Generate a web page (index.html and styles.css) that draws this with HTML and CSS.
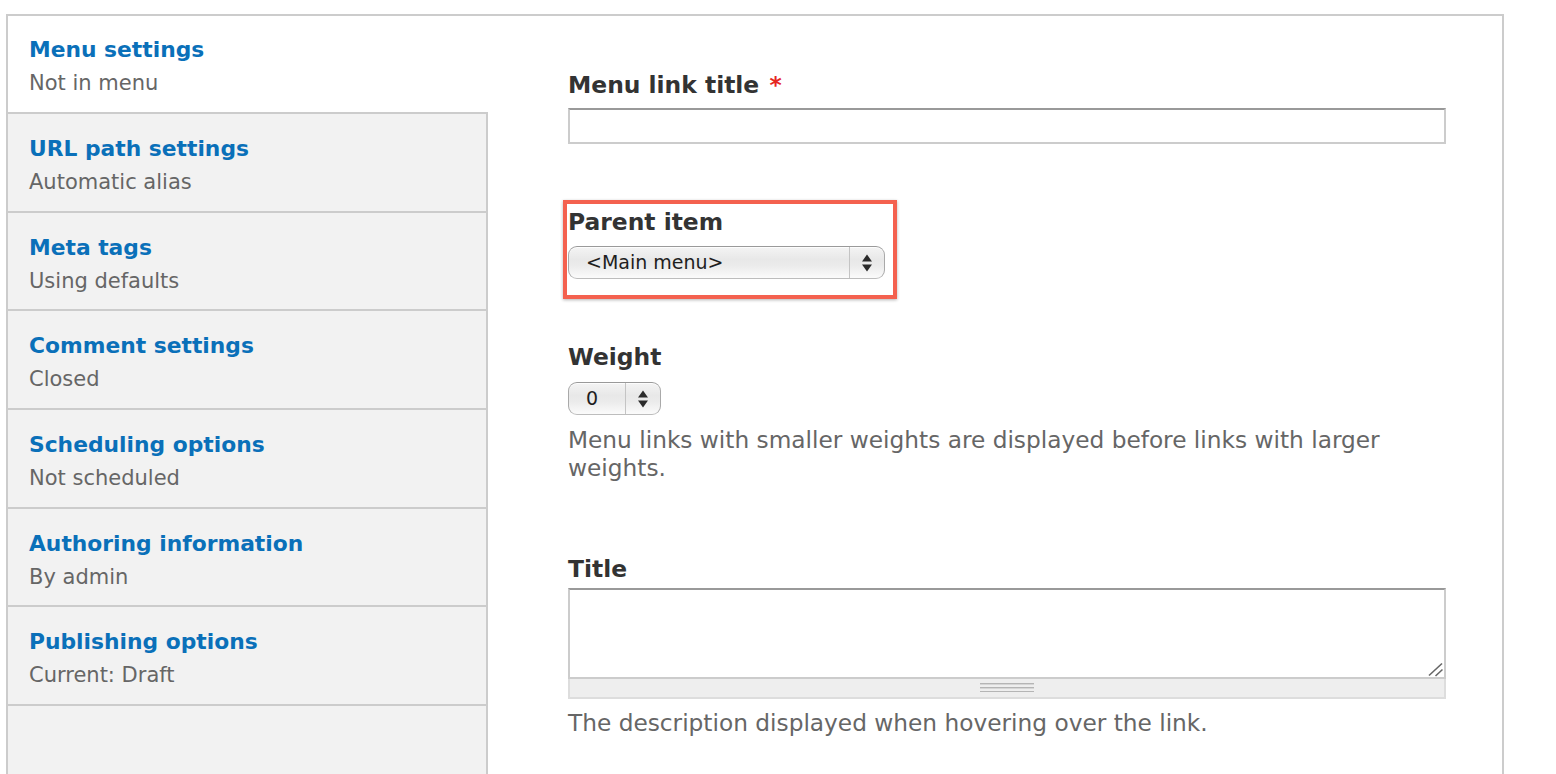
FILE: index.html
```html
<!DOCTYPE html>
<html lang="en">
<head>
<meta charset="utf-8">
<title>Menu settings</title>
<link rel="stylesheet" href="styles.css">
</head>
<body>
<div class="page">
  <div class="vtabs">
    <ul class="tab-list">
      <li class="tab active"><a class="tab-title">Menu settings</a><span class="tab-summary">Not in menu</span></li>
      <li class="tab"><a class="tab-title">URL path settings</a><span class="tab-summary">Automatic alias</span></li>
      <li class="tab"><a class="tab-title">Meta tags</a><span class="tab-summary">Using defaults</span></li>
      <li class="tab"><a class="tab-title">Comment settings</a><span class="tab-summary">Closed</span></li>
      <li class="tab"><a class="tab-title">Scheduling options</a><span class="tab-summary">Not scheduled</span></li>
      <li class="tab"><a class="tab-title">Authoring information</a><span class="tab-summary">By admin</span></li>
      <li class="tab"><a class="tab-title">Publishing options</a><span class="tab-summary">Current: Draft</span></li>
      <li class="tab-filler"></li>
    </ul>
    <div class="pane">
      <div class="item item-link-title">
        <label class="label">Menu link title <span class="req">*</span></label>
        <input class="text-input" type="text">
      </div>

      <div class="highlight">
        <label class="label">Parent item</label>
        <div class="select select-parent">
          <span class="select-value">&lt;Main menu&gt;</span>
          <span class="select-arrows">
            <svg width="12" height="20" viewBox="0 0 12 20"><polygon points="1,8.5 6,1.5 11,8.5" fill="#2b2b2b"/><polygon points="1,11.5 11,11.5 6,18.5" fill="#2b2b2b"/></svg>
          </span>
        </div>
      </div>

      <div class="item item-weight">
        <label class="label">Weight</label>
        <div class="select select-weight">
          <span class="select-value">0</span>
          <span class="select-arrows">
            <svg width="12" height="20" viewBox="0 0 12 20"><polygon points="1,8.5 6,1.5 11,8.5" fill="#2b2b2b"/><polygon points="1,11.5 11,11.5 6,18.5" fill="#2b2b2b"/></svg>
          </span>
        </div>
        <p class="description desc-weight">Menu links with smaller weights are displayed before links with larger weights.</p>
      </div>

      <div class="item item-title">
        <label class="label">Title</label>
        <div class="textarea-wrap">
          <div class="textarea-box">
            <textarea class="textarea"></textarea>
            <svg class="resizer" width="16" height="16" viewBox="0 0 16 16"><line x1="1" y1="14.5" x2="14" y2="2.5" stroke="#666" stroke-width="1.6"/><line x1="7.5" y1="15" x2="14.5" y2="8.5" stroke="#666" stroke-width="1.6"/></svg>
          </div>
          <div class="grippie"><div class="grip"></div></div>
        </div>
        <p class="description desc-title">The description displayed when hovering over the link.</p>
      </div>
    </div>
  </div>
</div>
</body>
</html>
```

FILE: styles.css
```css
html, body {
  margin: 0;
  padding: 0;
  background: #fff;
  overflow: hidden;
}

body {
  font-family: "DejaVu Sans", Verdana, sans-serif;
  color: #333;
}

.page {
  padding: 14px 0 0 6px;
}

.vtabs {
  display: flex;
  width: 1498px;
  height: 820px;
  box-sizing: border-box;
  border: 2px solid #ccc;
}

/* ---------- Vertical tab list ---------- */
.tab-list {
  display: flex;
  flex-direction: column;
  width: 480px;
  flex: 0 0 480px;
  margin: 0;
  padding: 0;
  list-style: none;
}

.tab {
  flex: 0 0 auto;
  height: 98.67px;
  box-sizing: border-box;
  padding: 19px 0 0 21px;
  background: #f2f2f2;
  border-right: 2px solid #ccc;
  border-bottom: 2px solid #ccc;
}

.tab.active {
  height: 98px;
  padding-top: 18px;
  background: #fff;
  border-right: none;
}

.tab-filler {
  flex: 1;
  background: #f2f2f2;
  border-right: 2px solid #ccc;
}

.tab-title {
  display: block;
  font-size: 21.8px;
  line-height: 32px;
  font-weight: 700;
  color: #0a70b9;
  text-decoration: none;
}

.tab-summary {
  display: block;
  margin-top: 1px;
  font-size: 21px;
  line-height: 32px;
  color: #666;
}

/* ---------- Pane ---------- */
.pane {
  flex: 1;
  padding: 55px 0 0 80px;
}

.label {
  display: block;
  font-size: 23.4px;
  line-height: 28px;
  font-weight: 700;
  color: #333;
}

.req {
  margin-left: 2px;
  color: #e6261f;
}

.text-input {
  display: block;
  box-sizing: border-box;
  width: 878px;
  height: 36px;
  margin: 9px 0 0 0;
  padding: 0;
  border: 2px solid #ccc;
  border-top-color: #999;
  background: #fff;
  outline: none;
}

/* highlight annotation around the Parent item field */
.highlight {
  width: 334px;
  box-sizing: border-box;
  margin: 56px 0 0 -5px;
  padding: 4px 0 16px 1px;
  border: 4px solid #f4614f;
  box-shadow: 0 1px 3px rgba(0, 0, 0, 0.3);
}

.select {
  display: flex;
  align-items: center;
  box-sizing: border-box;
  height: 33px;
  margin-top: 10px;
  border: 1px solid #a9a9a9;
  border-top-color: #9a9a9a;
  border-bottom-color: #bdbdbd;
  border-radius: 9px;
  background: linear-gradient(to bottom, #f4f4f4 0%, #e8e8e8 40%, #ebebeb 60%, #fbfbfb 100%);
  box-shadow: inset 0 1px 0 rgba(255, 255, 255, 0.8);
}

.select-parent {
  width: 317px;
}

.select-weight {
  width: 93px;
  margin-top: 11px;
}

.select-value {
  flex: 1;
  padding-left: 17px;
  font-size: 19px;
  line-height: 31px;
  color: #1e1e1e;
}

.select-arrows {
  display: flex;
  align-items: center;
  justify-content: center;
  width: 34px;
  height: 31px;
  border-left: 1px solid #c4c4c4;
}

.select-arrows svg {
  display: block;
}

.item-weight {
  margin-top: 44px;
}

.description {
  margin: 0;
  width: 878px;
  font-size: 23.25px;
  line-height: 28px;
  color: #666;
}

.desc-weight {
  margin-top: 11px;
}

.item-title {
  margin-top: 73px;
}

.textarea-wrap {
  width: 878px;
  margin-top: 5px;
}

.textarea-box {
  position: relative;
  height: 91px;
}

.textarea {
  display: block;
  box-sizing: border-box;
  width: 878px;
  height: 91px;
  margin: 0;
  padding: 0;
  border: 2px solid #ccc;
  border-top-color: #999;
  background: #fff;
  resize: none;
  outline: none;
}

.resizer {
  position: absolute;
  right: 2px;
  bottom: 2px;
}

.grippie {
  box-sizing: border-box;
  height: 20px;
  padding-top: 4px;
  background: #eee;
  border: 2px solid #ddd;
  border-top: none;
}

.grip {
  width: 54px;
  height: 9px;
  margin: 0 auto;
  background: repeating-linear-gradient(to bottom, #b5b5b5 0 1px, #d6d6d6 1px 2px, #eee 2px 4px);
}

.desc-title {
  margin-top: 10px;
}
```
